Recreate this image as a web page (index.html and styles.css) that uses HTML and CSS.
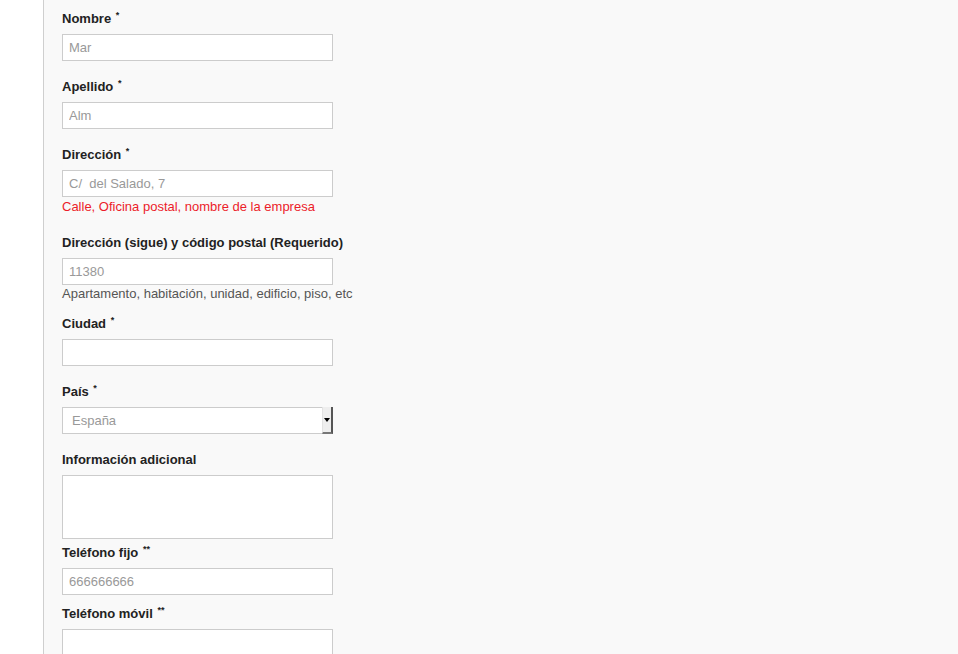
FILE: index.html
```html
<!DOCTYPE html>
<html lang="es">
<head>
<meta charset="utf-8">
<title>Formulario</title>
<link rel="stylesheet" href="styles.css">
</head>
<body>
<div class="page">
  <form class="panel">
    <div class="field">
      <label class="label">Nombre <span class="req">*</span></label>
      <input class="text" type="text" value="Mar">
    </div>
    <div class="field">
      <label class="label">Apellido <span class="req">*</span></label>
      <input class="text" type="text" value="Alm">
    </div>
    <div class="field field-red">
      <label class="label">Dirección <span class="req">*</span></label>
      <input class="text" type="text" value="C/&nbsp; del Salado, 7">
      <div class="help help-red">Calle, Oficina postal, nombre de la empresa</div>
    </div>
    <div class="field field-grey">
      <label class="label">Dirección (sigue) y código postal (Requerido)</label>
      <input class="text" type="text" value="11380">
      <div class="help help-grey">Apartamento, habitación, unidad, edificio, piso, etc</div>
    </div>
    <div class="field">
      <label class="label">Ciudad <span class="req">*</span></label>
      <input class="text" type="text" value="">
    </div>
    <div class="field field-select">
      <label class="label">País <span class="req">*</span></label>
      <div class="select">
        <span class="select-value">España</span>
        <span class="select-btn"><span class="tri"></span></span>
      </div>
    </div>
    <div class="field field-area">
      <label class="label">Información adicional</label>
      <div class="area"></div>
    </div>
    <div class="field field-tel">
      <label class="label">Teléfono fijo <span class="req">**</span></label>
      <input class="text" type="text" value="666666666">
    </div>
    <div class="field">
      <label class="label">Teléfono móvil <span class="req">**</span></label>
      <input class="text" type="text" value="">
    </div>
  </form>
</div>
</body>
</html>
```

FILE: styles.css
```css
html, body {
  margin: 0;
  padding: 0;
  background: #ffffff;
  font-family: "Liberation Sans", Arial, Helvetica, sans-serif;
}

.page {
  margin-left: 43px;
  border-left: 1px solid #cfcfcf;
  background: #f9f9f9;
  height: 700px;
  overflow: hidden;
}

.panel {
  display: flex;
  flex-direction: column;
  padding: 8px 0 0 18px;
  margin: 0;
}

.field {
  display: flex;
  flex-direction: column;
  align-items: flex-start;
  margin-bottom: 15px;
}

.field-red { margin-bottom: 18px; }
.field-grey { margin-bottom: 12px; }
.field-select { margin-bottom: 15px; }
.field-area { margin-bottom: 3px; }
.field-tel { margin-bottom: 8px; }

.label {
  display: block;
  font-size: 13px;
  line-height: 18px;
  font-weight: bold;
  color: #222222;
  margin-top: 2px;
  margin-bottom: 6px;
}

.req {
  font-size: 9px;
  vertical-align: 5px;
  line-height: 0;
  margin-left: 1px;
}

.text {
  box-sizing: border-box;
  width: 271px;
  height: 27px;
  margin: 0;
  padding: 0 6px;
  border: 1px solid #cccccc;
  background: #ffffff;
  font-family: "Liberation Sans", Arial, Helvetica, sans-serif;
  font-size: 13px;
  color: #999999;
  outline: none;
}

.help {
  font-size: 13px;
  line-height: 15px;
}

.help-red {
  color: #ec1c2a;
  margin-top: 2px;
}

.help-grey {
  color: #555555;
  margin-top: 1px;
}

.select {
  box-sizing: border-box;
  width: 271px;
  height: 27px;
  border: 1px solid #cccccc;
  border-right: none;
  background: #ffffff;
  display: flex;
  align-items: center;
  justify-content: space-between;
}

.select-value {
  padding-left: 9px;
  font-size: 13px;
  color: #999999;
}

.select-btn {
  box-sizing: border-box;
  width: 11px;
  height: 27px;
  margin-top: -1px;
  margin-bottom: -1px;
  background: #eeeeee;
  border-left: 1px solid #e2e2e2;
  border-right: 2px solid #555555;
  border-bottom: 2px solid #777777;
  display: flex;
  align-items: center;
  justify-content: center;
}

.tri {
  width: 0;
  height: 0;
  border-left: 3px solid transparent;
  border-right: 3px solid transparent;
  border-top: 4px solid #000000;
  margin-top: 1px;
}

.area {
  box-sizing: border-box;
  width: 271px;
  height: 64px;
  border: 1px solid #cccccc;
  background: #ffffff;
}
```
